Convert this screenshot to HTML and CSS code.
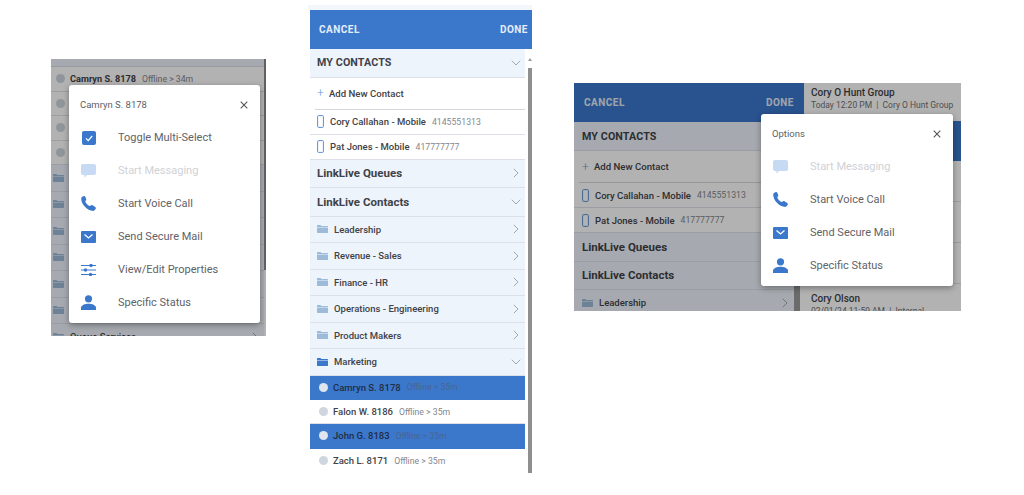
FILE: index.html
```html
<!DOCTYPE html>
<html lang="en">
<head>
    <meta charset="UTF-8">
    <meta name="viewport" content="width=device-width, initial-scale=1.0">
    <title>LinkLive Contacts</title>
    <link rel="stylesheet" href="styles.css">
</head>
<body>
    <!-- Shared icons -->
    <svg class="sprites" aria-hidden="true">
        <symbol id="i-check" viewBox="0 0 14 14"><rect width="14" height="14" rx="2" fill="#3b78cc"/><path d="M4 7.4l2.2 2.2L10.2 5" fill="none" stroke="#fff" stroke-width="1.2"/></symbol>
        <symbol id="i-msg" viewBox="0 0 15 14"><path d="M2 0h11a2 2 0 0 1 2 2v7a2 2 0 0 1-2 2H6l-2.500 2.800V11H2a2 2 0 0 1-2-2V2a2 2 0 0 1 2-2z" fill="#c6daf4"/></symbol>
        <symbol id="i-call" viewBox="0 0 15 15"><path d="M.2 2.400C.2 1.300 2.500-.2 3.400.1c.8.3 2 3 1.900 3.700-.1.600-1 1.100-1 1.600.6 1.800 2.600 4 4.600 4.700.6 0 1-1 1.700-1 .8.100 4.100 2 4.300 2.800.2.900-1.400 3-2.600 3C6.300 15 .1 8.300.2 2.400z" fill="#3b78cc"/></symbol>
        <symbol id="i-mail" viewBox="0 0 15 12"><rect width="15" height="12" rx="1" fill="#3b78cc"/><path d="M3.500 3.500l4 3.500 4-3.500" fill="none" stroke="#fff" stroke-width="1.300"/></symbol>
        <symbol id="i-sliders" viewBox="0 0 15 12"><path d="M0 1.500h15M0 6h15M0 10.500h15" stroke="#3b78cc" stroke-width="1.100"/><circle cx="10" cy="1.500" r="1.700" fill="#3b78cc"/><circle cx="4.500" cy="6" r="1.700" fill="#3b78cc"/><circle cx="9.500" cy="10.500" r="1.700" fill="#3b78cc"/></symbol>
        <symbol id="i-person" viewBox="0 0 15 15"><circle cx="7.500" cy="3.800" r="3.600" fill="#3b78cc"/><path d="M0 15v-2.200C0 10.300 4 8.800 7.500 8.800s7.500 1.500 7.500 4V15z" fill="#3b78cc"/></symbol>
        <symbol id="i-folder" viewBox="0 0 11 8"><path d="M0 1V.6C0 .2.200 0 .6 0h3l.8.900h6c.4 0 .6.200.6.600V2H0zM0 2.500h11v5c0 .3-.2.500-.6.500H.6C.2 8 0 7.800 0 7.500z"/></symbol>
        <symbol id="i-close" viewBox="0 0 8 8"><path d="M.7.700l6.600 6.600M7.300.700L.7 7.300" fill="none" stroke="#555" stroke-width="1.100"/></symbol>
        <symbol id="i-right" viewBox="0 0 6 10"><path d="M.8.800L5 5 .8 9.200" fill="none" stroke="#a3a8ae" stroke-width="1"/></symbol>
        <symbol id="i-down" viewBox="0 0 10 6"><path d="M.8.800L5 5 9.200.800" fill="none" stroke="#a3a8ae" stroke-width="1"/></symbol>
        <symbol id="i-device" viewBox="0 0 7 13"><rect x=".6" y=".6" width="5.800" height="11.800" rx="1" fill="none" stroke="#5b8ed6" stroke-width="1"/></symbol>
    </svg>

    <div class="canvas">
        <!-- Shot 1: contact menu over the list -->
        <section class="shot shot-menu">
            <div class="list list-menu">
                <div class="spacer"></div>
                <div class="row person"><span class="dot"></span><b>Camryn S. 8178</b><small>Offline &gt; 34m</small></div>
                <div class="row person"><span class="dot"></span></div>
                <div class="row person"><span class="dot"></span></div>
                <div class="row person"><span class="dot"></span></div>
                <div class="row folder"><svg class="fold"><use href="#i-folder"/></svg></div>
                <div class="row folder"><svg class="fold"><use href="#i-folder"/></svg></div>
                <div class="row folder"><svg class="fold"><use href="#i-folder"/></svg></div>
                <div class="row folder"><svg class="fold"><use href="#i-folder"/></svg></div>
                <div class="row folder"><svg class="fold"><use href="#i-folder"/></svg></div>
                <div class="row folder"><svg class="fold"><use href="#i-folder"/></svg></div>
                <div class="row folder"><svg class="fold"><use href="#i-folder"/></svg><span>Queue Services</span><svg class="chev"><use href="#i-right"/></svg></div>
            </div>
            <div class="bar bar-menu"></div>
            <div class="scrim"></div>
            <div class="dialog dialog-menu">
                <div class="dialog-head"><span>Camryn S. 8178</span><svg class="close"><use href="#i-close"/></svg></div>
                <div class="item"><span class="slot"><svg class="ic-check"><use href="#i-check"/></svg></span>Toggle Multi-Select</div>
                <div class="item off"><span class="slot"><svg class="ic-msg"><use href="#i-msg"/></svg></span>Start Messaging</div>
                <div class="item"><span class="slot"><svg class="ic-call"><use href="#i-call"/></svg></span>Start Voice Call</div>
                <div class="item"><span class="slot"><svg class="ic-mail"><use href="#i-mail"/></svg></span>Send Secure Mail</div>
                <div class="item"><span class="slot"><svg class="ic-sliders"><use href="#i-sliders"/></svg></span>View/Edit Properties</div>
                <div class="item"><span class="slot"><svg class="ic-person"><use href="#i-person"/></svg></span>Specific Status</div>
            </div>
        </section>

        <!-- Shot 2: multi-select list -->
        <section class="shot shot-list">
            <header class="topbar"><span>CANCEL</span><span>DONE</span></header>
            <div class="body">
                <div class="list">
                    <div class="row section short"><b>MY CONTACTS</b><svg class="chev-d"><use href="#i-down"/></svg></div>
                    <div class="row add"><span class="plus">+</span>Add New Contact</div>
                    <div class="row phone"><svg class="device"><use href="#i-device"/></svg><b>Cory Callahan - Mobile</b><small>4145551313</small></div>
                    <div class="row phone"><svg class="device"><use href="#i-device"/></svg><b>Pat Jones - Mobile</b><small>417777777</small></div>
                    <div class="row section"><b>LinkLive Queues</b><svg class="chev"><use href="#i-right"/></svg></div>
                    <div class="row section"><b>LinkLive Contacts</b><svg class="chev-d"><use href="#i-down"/></svg></div>
                    <div class="row folder"><svg class="fold"><use href="#i-folder"/></svg><span>Leadership</span><svg class="chev"><use href="#i-right"/></svg></div>
                    <div class="row folder"><svg class="fold"><use href="#i-folder"/></svg><span>Revenue - Sales</span><svg class="chev"><use href="#i-right"/></svg></div>
                    <div class="row folder"><svg class="fold"><use href="#i-folder"/></svg><span>Finance - HR</span><svg class="chev"><use href="#i-right"/></svg></div>
                    <div class="row folder"><svg class="fold"><use href="#i-folder"/></svg><span>Operations - Engineering</span><svg class="chev"><use href="#i-right"/></svg></div>
                    <div class="row folder"><svg class="fold"><use href="#i-folder"/></svg><span>Product Makers</span><svg class="chev"><use href="#i-right"/></svg></div>
                    <div class="row folder open"><svg class="fold"><use href="#i-folder"/></svg><span>Marketing</span><svg class="chev-d"><use href="#i-down"/></svg></div>
                    <div class="row person picked"><span class="dot"></span><b>Camryn S. 8178</b><small>Offline &gt; 35m</small></div>
                    <div class="row person"><span class="dot"></span><b>Falon W. 8186</b><small>Offline &gt; 35m</small></div>
                    <div class="row person picked"><span class="dot"></span><b>John G. 8183</b><small>Offline &gt; 35m</small></div>
                    <div class="row person end"><span class="dot"></span><b>Zach L. 8171</b><small>Offline &gt; 35m</small></div>
                </div>
                <div class="gutter"><div class="bar"></div></div>
            </div>
        </section>

        <!-- Shot 3: options menu over the split view -->
        <section class="shot shot-options">
            <div class="side">
                <header class="topbar"><span>CANCEL</span><span>DONE</span></header>
                <div class="body">
                    <div class="list">
                        <div class="row section short"><b>MY CONTACTS</b></div>
                        <div class="row add"><span class="plus">+</span>Add New Contact</div>
                        <div class="row phone"><svg class="device"><use href="#i-device"/></svg><b>Cory Callahan - Mobile</b><small>4145551313</small></div>
                        <div class="row phone"><svg class="device"><use href="#i-device"/></svg><b>Pat Jones - Mobile</b><small>417777777</small></div>
                        <div class="row section"><b>LinkLive Queues</b></div>
                        <div class="row section"><b>LinkLive Contacts</b></div>
                        <div class="row folder"><svg class="fold"><use href="#i-folder"/></svg><span>Leadership</span><svg class="chev"><use href="#i-right"/></svg></div>
                    </div>
                    <div class="gutter"><div class="bar"></div></div>
                </div>
            </div>
            <div class="convos">
                <div class="convo first"><b>Cory O Hunt Group</b><small>Today 12:20 PM &nbsp;|&nbsp; Cory O Hunt Group</small></div>
                <div class="convo current"></div>
                <div class="convo"></div>
                <div class="convo"></div>
                <div class="convo"></div>
                <div class="convo last"><b>Cory Olson</b><small>02/01/24 11:59 AM &nbsp;|&nbsp; Internal</small></div>
            </div>
            <div class="scrim"></div>
            <div class="dialog dialog-options">
                <div class="dialog-head"><span>Options</span><svg class="close"><use href="#i-close"/></svg></div>
                <div class="item off"><span class="slot"><svg class="ic-msg"><use href="#i-msg"/></svg></span>Start Messaging</div>
                <div class="item"><span class="slot"><svg class="ic-call"><use href="#i-call"/></svg></span>Start Voice Call</div>
                <div class="item"><span class="slot"><svg class="ic-mail"><use href="#i-mail"/></svg></span>Send Secure Mail</div>
                <div class="item"><span class="slot"><svg class="ic-person"><use href="#i-person"/></svg></span>Specific Status</div>
            </div>
        </section>
    </div>
</body>
</html>
```

FILE: styles.css
```css
* {
    box-sizing: border-box;
}
body {
    margin: 0;
    background-color: #fff;
    font-family: Roboto, "Liberation Sans", sans-serif;
    color: #3f4247;
    overflow: hidden;
}
.sprites {
    display: none;
}
.canvas {
    position: relative;
    width: 1024px;
    height: 495px;
    overflow: hidden;
}

/* The three screenshots sit on a free canvas */
.shot {
    position: absolute;
    overflow: hidden;
    background-color: #fff;
}
.shot-menu {
    left: 51px;
    top: 59px;
    width: 215px;
    height: 277px;
}
.shot-list {
    left: 310px;
    top: 10px;
    width: 222px;
    height: 463px;
    overflow: visible;
    display: flex;
    flex-direction: column;
}
.shot-list::before {
    content: "";
    position: absolute;
    left: -2px;
    right: 0;
    top: -5px;
    height: 5px;
    background-color: #f3f6fb;
}
.shot-options {
    left: 574px;
    top: 83px;
    width: 387px;
    height: 228px;
    display: flex;
}
.scrim {
    position: absolute;
    inset: 0;
    background-color: rgba(0, 0, 0, 0.3);
}

/* Top bar */
.topbar {
    display: flex;
    flex: none;
    justify-content: space-between;
    align-items: center;
    height: 38.500px;
    padding: 0 4px 0 9px;
    background-color: #3b78cc;
    color: #e4edf8;
    font-size: 10px;
    font-weight: 700;
    letter-spacing: 0.5px;
}
.shot-options .topbar {
    height: 39px;
    padding: 0 10px 1px;
}

/* List layout */
.body {
    display: flex;
    flex: 1;
    min-height: 0;
}
.list {
    flex: none;
    width: 215px;
}
.gutter {
    flex: 1;
    position: relative;
}
.bar {
    position: absolute;
    right: 0;
    top: 19px;
    bottom: 0;
    width: 4px;
    background-color: #8f8f8f;
}
.shot-list .bar::before {
    content: "";
    position: absolute;
    left: 0;
    top: -10px;
    border-left: 2px solid transparent;
    border-right: 2px solid transparent;
    border-bottom: 3px solid #9a9a9a;
}
.side {
    flex: none;
    width: 230px;
}
.side .list {
    width: 220px;
}
.side .gutter .bar {
    right: 4px;
    width: 6px;
    top: 0;
    background-color: #9a9a9a;
}
.bar-menu {
    top: 0;
    bottom: 66px;
    right: 0;
    width: 2px;
    background-color: #8b8b8b;
}
.list-menu {
    width: 213px;
    background-color: #fff;
}
.spacer {
    height: 8px;
    background-color: #eef4fc;
    border-bottom: 1px solid #d8dce2;
}

/* Rows */
.row {
    display: flex;
    align-items: center;
    white-space: nowrap;
    border-bottom: 1px solid #dde1e7;
}
.row b {
    font-weight: 500;
}
.row small {
    color: #84878d;
    font-size: 8.700px;
    margin-left: 6px;
}
.section {
    justify-content: space-between;
    height: 28.500px;
    padding: 0 6px 0 7px;
    background-color: #eef4fc;
    font-size: 11.500px;
}
.section b {
    font-weight: 700;
}
.section.short {
    height: 29px;
    font-size: 10.700px;
    letter-spacing: 0.1px;
}
.add {
    height: 32px;
    margin-left: 5px;
    padding-left: 2px;
    font-size: 9.600px;
    font-weight: 500;
    border-bottom-color: #d5d8dd;
}
.plus {
    width: 12px;
    color: #6f9ad6;
    font-size: 12px;
    font-weight: 300;
}
.phone {
    height: 25px;
    padding-left: 7px;
    font-size: 9.500px;
}
.device {
    width: 7px;
    height: 13px;
    margin-right: 6px;
}
.folder {
    height: 26.500px;
    padding: 0 6px 0 7px;
    background-color: #eef4fc;
    font-size: 9.500px;
    font-weight: 500;
}
.fold {
    flex: none;
    width: 11px;
    height: 8px;
    margin-right: 6px;
    fill: #9dbbd9;
}
.folder.open .fold {
    fill: #3b78cc;
}
.chev {
    width: 6px;
    height: 10px;
    margin-left: auto;
}
.chev-d {
    width: 10px;
    height: 6px;
    margin-left: auto;
}
.section .chev-d,
.folder.open .chev-d {
    margin-right: -2px;
}
.person {
    height: 24.400px;
    padding-left: 9px;
    font-size: 9.500px;
}
.person.end {
    border-bottom: none;
}
.person .dot {
    flex: none;
    width: 9px;
    height: 9px;
    margin-right: 5px;
    border-radius: 50%;
    background-color: #cfd6df;
}
.person.picked {
    background-color: #3b78cc;
    border-bottom-color: #3b78cc;
    color: #1f2d44;
}
.person.picked .dot {
    background-color: #dfe5ee;
}
.person.picked small {
    color: #4a6590;
}
.list-menu .person {
    height: 24.500px;
    padding-left: 5px;
}
.list-menu .row b {
    font-weight: 700;
    font-size: 9.200px;
}
.list-menu .folder {
    padding-left: 2px;
}
.side .section,
.side .phone,
.side .folder {
    padding-left: 8px;
}
.side .add {
    padding-left: 3px;
}

/* Conversations */
.convos {
    flex: 1;
}
.convo {
    height: 41px;
    padding: 4px 7px;
    border-bottom: 1px solid #dfe3e9;
    font-size: 10px;
    white-space: nowrap;
}
.convo b {
    display: block;
    font-weight: 500;
    line-height: 13px;
}
.convo small {
    display: block;
    color: #6f7277;
    font-size: 8.500px;
    line-height: 13px;
}
.convo.first {
    height: 38px;
    padding-top: 3px;
    border-bottom: none;
}
.convo.current {
    height: 40px;
    background-color: #3b78cc;
    border-bottom: none;
}
.convo.last {
    padding-top: 7.500px;
}

/* Dialogs */
.dialog {
    position: absolute;
    padding-bottom: 4px;
    background-color: #fff;
    border-radius: 3px;
    box-shadow: 0 2px 6px rgba(0, 0, 0, 0.35);
}
.dialog-menu {
    left: 18px;
    top: 26px;
    width: 191px;
}
.dialog-options {
    left: 187px;
    top: 31px;
    width: 192px;
}
.dialog-head {
    display: flex;
    justify-content: space-between;
    align-items: flex-start;
    height: 36px;
    padding: 14px 12px 0 11px;
    color: #5c5f64;
    font-size: 9.500px;
    line-height: 12px;
}
.close {
    width: 8px;
    height: 8px;
    margin-top: 2px;
}
.item {
    display: flex;
    align-items: center;
    height: 33px;
    padding-left: 12px;
    color: #5f6267;
    font-size: 11px;
}
.item.off {
    color: #cfd2d6;
}
.slot {
    display: flex;
    justify-content: center;
    align-items: center;
    flex: none;
    width: 15px;
    height: 15px;
    margin-right: 22px;
}
.ic-check {
    width: 14px;
    height: 14px;
}
.ic-msg {
    width: 15px;
    height: 14px;
}
.ic-call {
    width: 15px;
    height: 15px;
}
.ic-mail {
    width: 15px;
    height: 12px;
}
.ic-sliders {
    width: 15px;
    height: 12px;
}
.ic-person {
    width: 15px;
    height: 15px;
}
```
